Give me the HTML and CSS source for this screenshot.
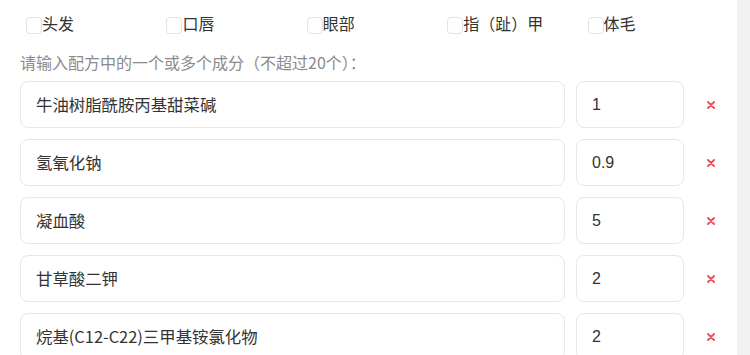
FILE: index.html
```html
<!DOCTYPE html>
<html lang="zh-CN">
<head>
  <meta charset="UTF-8">
  <title>配方成分</title>
  <link rel="stylesheet" href="styles.css">
</head>
<body>

<div class="page">
  <div class="main">
    <div class="parts">
      <label class="part"><span class="box"></span>头发</label>
      <label class="part"><span class="box"></span>口唇</label>
      <label class="part"><span class="box"></span>眼部</label>
      <label class="part"><span class="box"></span>指（趾）甲</label>
      <label class="part"><span class="box"></span>体毛</label>
    </div>

    <p class="hint">请输入配方中的一个或多个成分（不超过20个）：</p>

    <div class="rows" id="rows"></div>
  </div>
  <div class="strip"></div>
</div>

<script>
  const ingredients = [
    { nom: "牛油树脂酰胺丙基甜菜碱", dose: "1" },
    { nom: "氢氧化钠", dose: "0.9" },
    { nom: "凝血酸", dose: "5" },
    { nom: "甘草酸二钾", dose: "2" },
    { nom: "烷基(C12-C22)三甲基铵氯化物", dose: "2" },
  ];

  const rows = document.getElementById("rows");

  ingredients.forEach(item => {
    const div = document.createElement("div");
    div.classList.add("row");
    div.innerHTML = `
      <div class="field name">${item.nom}</div>
      <div class="field dose">${item.dose}</div>
      <div class="remove">
        <svg width="8" height="8" viewBox="0 0 8 8"><path d="M1 1L7 7M7 1L1 7" stroke="#e5505a" stroke-width="1.8" stroke-linecap="round"/></svg>
      </div>
    `;
    rows.appendChild(div);
  });
</script>

</body>
</html>
```

FILE: styles.css
```css
body {
  margin: 0;
  font-family: "Noto Sans CJK SC", "Noto Sans", sans-serif;
  color: #333;
  background: white;
}
.page {
  display: flex;
  height: 355px;
  overflow: hidden;
}
.main {
  width: 717px;
  padding-left: 20px;
}
.strip {
  flex: 1;
  background: #f4f2f0;
}
.parts {
  display: grid;
  grid-template-columns: repeat(5, 1fr);
  width: 702px;
  padding-top: 10px;
  height: 26px;
  align-items: center;
}
.part {
  display: flex;
  align-items: center;
  padding-left: 6px;
  font-size: 16px;
  line-height: 22px;
}
.box {
  width: 14px;
  height: 15px;
  border: 1px solid #e7e1da;
  border-radius: 4px;
  margin-top: 4px;
  background: white;
}
.hint {
  margin: 15px 0 0;
  font-size: 16px;
  line-height: 22px;
  color: #8a8a8a;
}
.rows {
  margin-top: 8px;
  display: flex;
  flex-direction: column;
  gap: 11px;
}
.row {
  display: flex;
  align-items: center;
}
.field {
  box-sizing: border-box;
  height: 47px;
  border: 1px solid #ece6df;
  border-radius: 8px;
  padding: 0 15px;
  font-size: 16.4px;
  line-height: 45px;
}
.name {
  width: 545px;
}
.dose {
  width: 108px;
  margin-left: 11px;
  font-size: 16px;
  font-family: "Liberation Sans", Arial, sans-serif;
}
.remove {
  width: 53px;
  display: flex;
  justify-content: center;
}
```
